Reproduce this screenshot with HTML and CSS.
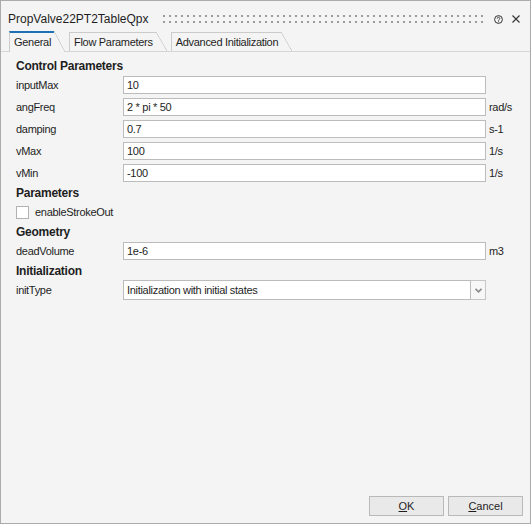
FILE: index.html
```html
<!DOCTYPE html>
<html lang="en">
<head>
<meta charset="UTF-8">
<meta name="viewport" content="width=device-width, initial-scale=1.0">
<title>PropValve22PT2TableQpx</title>
<link rel="stylesheet" href="styles.css">
</head>
<body>
<div class="window">
  <div class="titlebar">
    <span class="title">PropValve22PT2TableQpx</span>
    <span class="grip"></span>
    <svg class="tb-icon" width="9" height="9" viewBox="0 0 9 9">
      <circle cx="4.5" cy="4.5" r="3.9" fill="none" stroke="#333" stroke-width="1"/>
      <path d="M3.2 3.6a1.3 1.3 0 1 1 1.9 1.1c-.5.3-.6.5-.6 1" fill="none" stroke="#333" stroke-width="0.9"/>
      <circle cx="4.5" cy="6.7" r="0.55" fill="#333"/>
    </svg>
    <svg class="tb-icon close" width="8" height="8" viewBox="0 0 8 8">
      <path d="M0.5 0.5L7.5 7.5M7.5 0.5L0.5 7.5" stroke="#333" stroke-width="1.1"/>
    </svg>
  </div>

  <div class="tabs">
    <div class="tab active">General</div>
    <div class="tab">Flow Parameters</div>
    <div class="tab">Advanced Initialization</div>
  </div>

  <div class="panel">
    <div class="group-title first">Control Parameters</div>
    <div class="row">
      <label>inputMax</label>
      <input class="field" type="text" value="10">
      <span class="unit"></span>
    </div>
    <div class="row">
      <label>angFreq</label>
      <input class="field" type="text" value="2 * pi * 50">
      <span class="unit">rad/s</span>
    </div>
    <div class="row">
      <label>damping</label>
      <input class="field" type="text" value="0.7">
      <span class="unit">s-1</span>
    </div>
    <div class="row">
      <label>vMax</label>
      <input class="field" type="text" value="100">
      <span class="unit">1/s</span>
    </div>
    <div class="row">
      <label>vMin</label>
      <input class="field" type="text" value="-100">
      <span class="unit">1/s</span>
    </div>

    <div class="group-title">Parameters</div>
    <div class="check-row">
      <span class="checkbox"></span>
      <span>enableStrokeOut</span>
    </div>

    <div class="group-title">Geometry</div>
    <div class="row">
      <label>deadVolume</label>
      <input class="field" type="text" value="1e-6">
      <span class="unit">m3</span>
    </div>

    <div class="group-title">Initialization</div>
    <div class="row">
      <label>initType</label>
      <div class="combo">
        <span class="combo-text">Initialization with initial states</span>
        <span class="combo-btn">
          <svg width="7" height="5" viewBox="0 0 7 5">
            <path d="M0.5 0.8L3.5 3.8L6.5 0.8" fill="none" stroke="#8a8a8a" stroke-width="1.6"/>
          </svg>
        </span>
      </div>
      <span class="unit"></span>
    </div>
  </div>

  <div class="footer">
    <button class="btn"><u>O</u>K</button>
    <button class="btn"><u>C</u>ancel</button>
  </div>
</div>
</body>
</html>
```

FILE: styles.css
```css
body {
  margin: 0;
  font-family: "Liberation Sans", Arial, sans-serif;
  font-size: 11px;
  color: #1e1e1e;
  background-color: #f4f4f4;
}
.window {
  box-sizing: border-box;
  width: 531px;
  height: 524px;
  border: 1px solid #ababab;
  background-color: #f4f4f4;
  display: flex;
  flex-direction: column;
}

/* title bar */
.titlebar {
  box-sizing: border-box;
  height: 30px;
  padding: 6px 10px 0 7px;
  display: flex;
  align-items: center;
}
.title {
  font-size: 12px;
  color: #1e1e1e;
}
/* drag handle: two rows of small square dots */
.grip {
  flex: 1;
  height: 8px;
  margin: 0 8px 0 14px;
  background:
    repeating-linear-gradient(90deg, #9c9c9c 0 2px, transparent 2px 6px) 0 0 / 100% 2px no-repeat,
    repeating-linear-gradient(90deg, #9c9c9c 0 2px, transparent 2px 6px) 0 100% / 100% 2px no-repeat;
}
.tb-icon {
  display: block;
}
.tb-icon.close {
  margin-left: 9px;
}

/* tab strip */
.tabs {
  box-sizing: border-box;
  height: 21px;
  padding-left: 8px;
  display: flex;
  align-items: flex-end;
  gap: 4px;
  border-bottom: 1px solid #d6d6d6;
}
.tab {
  position: relative;
  box-sizing: border-box;
  height: 19px;
  padding: 0 14px 0 4px;
  display: flex;
  align-items: center;
  letter-spacing: -0.3px;
  border-left: 1px solid #cbcbcb;
  border-top: 1px solid #cbcbcb;
  background-color: #f4f4f4;
}
.tab::after {
  content: "";
  position: absolute;
  right: 0;
  top: -1px;
  bottom: 0;
  width: 11px;
  background: linear-gradient(to top right, #f4f4f4 calc(50% - 0.6px), #c4c4c4 50%, #f4f4f4 calc(50% + 0.6px));
}
.tab.active {
  height: 21px;
  margin-bottom: -1px;
  border-top: 2px solid #1f70b4;
  padding-bottom: 1px;
}
.tab.active::after {
  top: -2px;
}

/* property panel */
.panel {
  flex: 1;
  padding: 7px 0 0 15px;
}
.group-title {
  height: 15px;
  line-height: 15px;
  margin-top: 2px;
  font-size: 12px;
  font-weight: bold;
  letter-spacing: -0.25px;
}
.group-title.first {
  margin-top: 0;
}
.row {
  height: 22px;
  display: grid;
  grid-template-columns: 107px 363px 1fr;
  align-items: center;
  letter-spacing: -0.3px;
}
.unit {
  padding-left: 3px;
}
.field {
  box-sizing: border-box;
  width: 100%;
  height: 18px;
  margin: 0;
  padding: 0 3px;
  border: 1px solid #bcbcbc;
  background-color: #fff;
  font-family: inherit;
  font-size: 11px;
  letter-spacing: -0.3px;
  color: #1e1e1e;
  outline: none;
}
.check-row {
  height: 22px;
  display: flex;
  align-items: center;
  gap: 6px;
  letter-spacing: -0.3px;
}
.checkbox {
  box-sizing: border-box;
  width: 13px;
  height: 13px;
  border: 1px solid #b2b2b2;
  background-color: #fff;
}

/* combo box */
.combo {
  height: 20px;
  display: flex;
}
.combo-text {
  box-sizing: border-box;
  flex: 1;
  padding: 0 3px;
  display: flex;
  align-items: center;
  border: 1px solid #bcbcbc;
  background-color: #fff;
}
.combo-btn {
  box-sizing: border-box;
  width: 15px;
  display: flex;
  align-items: center;
  justify-content: center;
  border: 1px solid #c6c6c6;
  border-left: none;
  background-color: #f7f7f7;
}

/* dialog buttons */
.footer {
  display: flex;
  justify-content: flex-end;
  gap: 4px;
  padding: 0 7px 7px 0;
}
.btn {
  box-sizing: border-box;
  width: 75px;
  height: 20px;
  padding: 0;
  border: 1px solid #b9b9b9;
  background-color: #e9e9e9;
  font-family: inherit;
  font-size: 11px;
  color: #1e1e1e;
}
.btn u {
  text-decoration-thickness: 1px;
}
```
